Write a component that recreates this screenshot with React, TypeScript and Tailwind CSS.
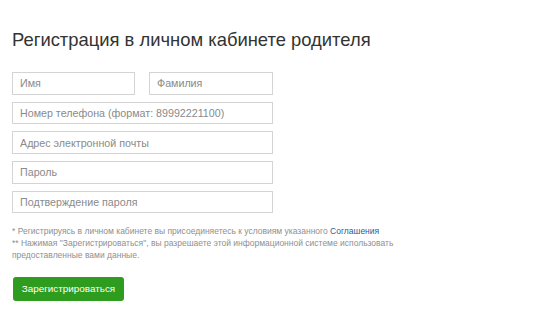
export default function App() {
  const input =
    "h-[22.5px] border border-[#d4d4d4] bg-white pl-[7px] text-[10.7px] text-[#555] placeholder:text-[#8a8a8a] outline-none";
  return (
    <div className="w-[550px] h-[327px] bg-white font-['Liberation_Sans',Arial,sans-serif] pl-[12px] pt-[28px]">
      <h1 className="text-[18.4px] leading-[24px] text-[#333] font-normal">
        Регистрация в личном кабинете родителя
      </h1>
      <div className="mt-[20px] flex w-[261px] flex-col gap-[7.2px]">
        <div className="flex gap-[14px]">
          <input className={input + " w-[123px]"} placeholder="Имя" />
          <input className={input + " w-[124px]"} placeholder="Фамилия" />
        </div>
        <input className={input + " w-[261px]"} placeholder="Номер телефона (формат: 89992221100)" />
        <input className={input + " w-[261px]"} placeholder="Адрес электронной почты" />
        <input className={input + " w-[261px]"} placeholder="Пароль" />
        <input className={input + " w-[261px]"} placeholder="Подтверждение пароля" />
      </div>
      <div className="mt-[12px] w-[392px] text-[8.5px] leading-[12px] text-[#8f8f8f]">
        <p>
          * Регистрируясь в личном кабинете вы присоединяетесь к условиям указанного{" "}
          <a className="text-[#1f5d9c]" href="#">Соглашения</a>
        </p>
        <p>
          ** Нажимая "Зарегистрироваться", вы разрешаете этой информационной системе использовать
          предоставленные вами данные.
        </p>
      </div>
      <button className="mt-[16px] ml-px flex h-[24px] w-[111px] items-center justify-center rounded-[3px] bg-[#2e9c1f] text-[9.9px] text-white">
        Зарегистрироваться
      </button>
    </div>
  );
}
